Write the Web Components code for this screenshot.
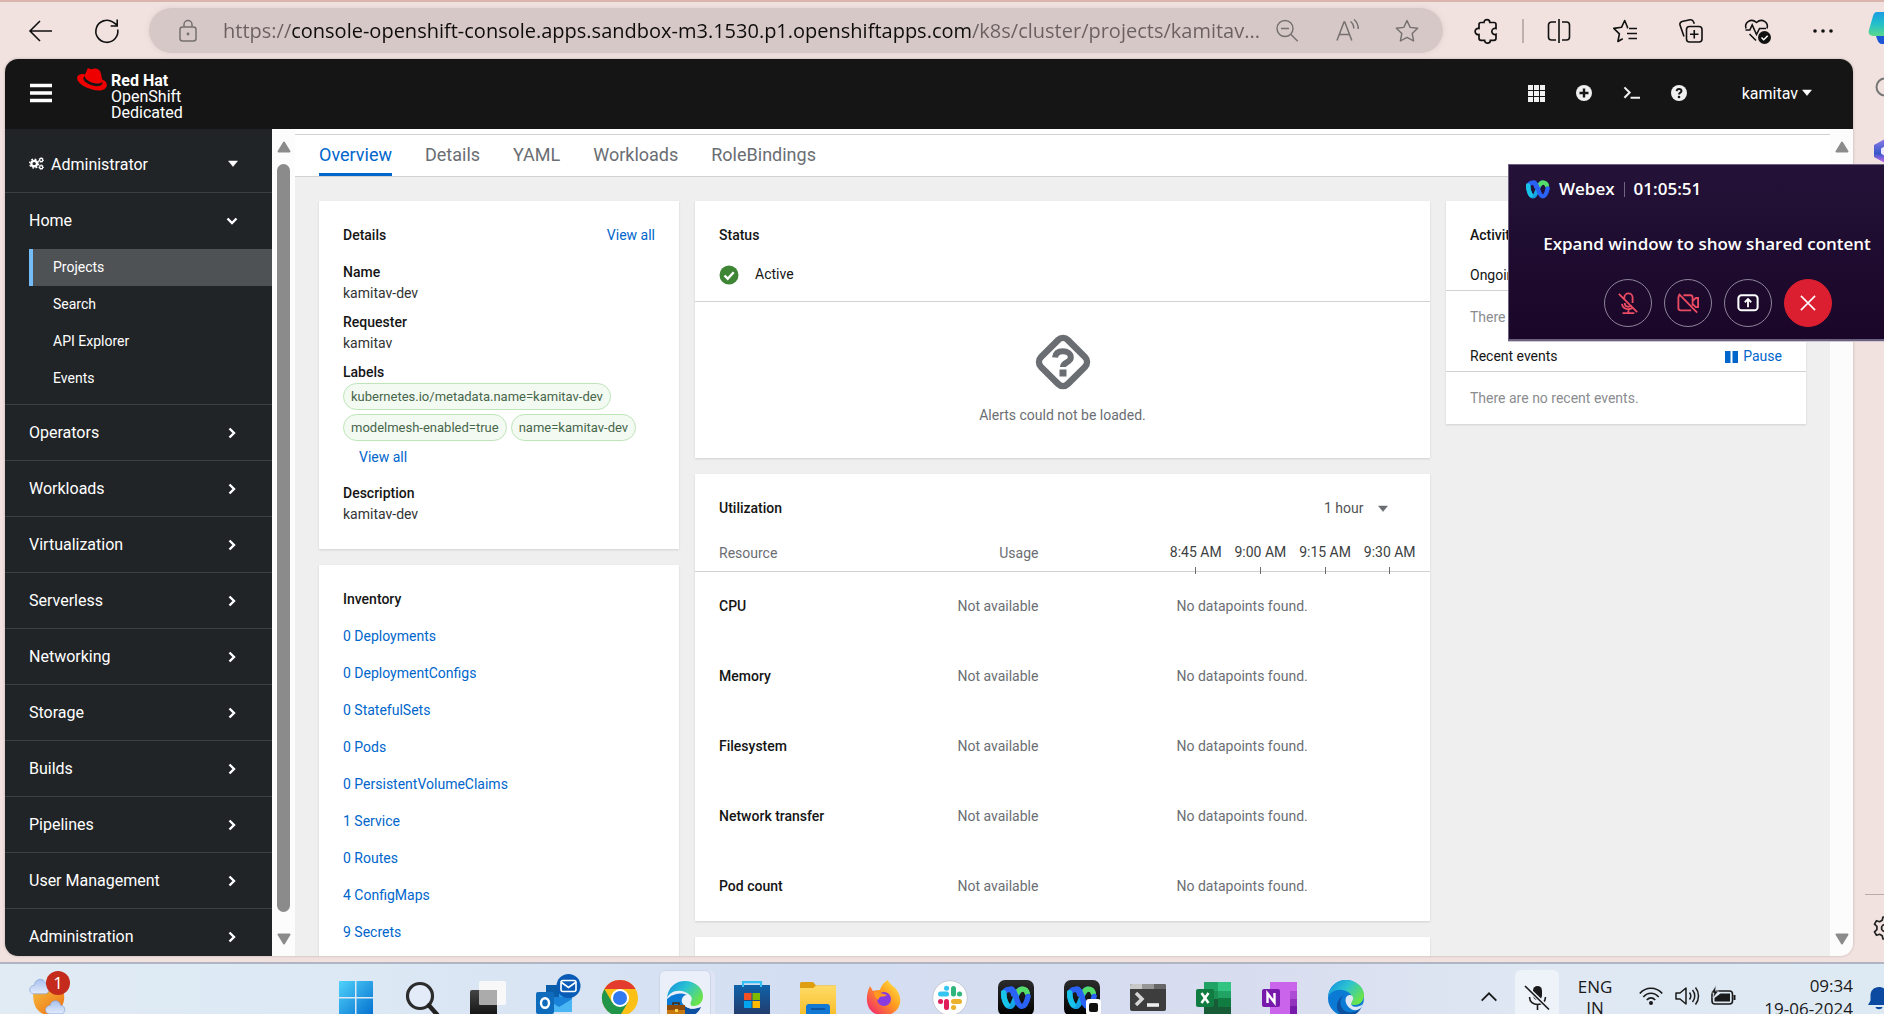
<!DOCTYPE html>
<html lang="en">
<head>
<meta charset="utf-8">
<title>kamitav-dev · Red Hat OpenShift Dedicated</title>
<style>
html, body { margin: 0; height: 100%; }
body { font: 14px/21px Roboto, sans-serif; color: #151515; overflow: hidden; }
</style>
</head>
<body>
<desktop-screen></desktop-screen>
<script>
const ICONS = {
  back: ['0 0 24 24', '<path d="M23 12H1M11 2 1 12l10 10" fill="none" stroke="currentColor" stroke-width="1.6"/>'],
  reload: ['0 0 24 24', '<path d="M22.700 10.500A11 11 0 1 1 18 3.200L22 6M22.200 .5V7h-6.500" fill="none" stroke="currentColor" stroke-width="1.600"/>'],
  lock: ['0 0 18 24', '<g fill="none" stroke="currentColor" stroke-width="1.500"><rect x="1" y="8" width="16" height="14" rx="2.500"/><path d="M5 8V5.500a4 4 0 0 1 8 0V8"/></g><circle cx="9" cy="15" r="1.400" fill="currentColor"/>'],
  zoomOut: ['0 0 24 24', '<g fill="none" stroke="currentColor" stroke-width="1.400"><circle cx="10" cy="9.500" r="8"/><path d="m15.700 15.300 7 7M6 9.500h8"/></g>'],
  readAloud: ['0 0 24 24', '<g fill="none" stroke="currentColor" stroke-width="1.500"><path d="m2 21.500 7-18.500h.8l7 18.500M4.800 15.500h9.200M15.500 2.500c2.200 1.700 3.300 4 3.300 7M19 .5c3 2.500 4.300 5.500 4.300 9.500"/></g>'],
  star: ['0 0 24 24', '<path d="m12 1.500 3.200 6.900 7.500.9-5.500 5.200 1.400 7.500L12 18.400 5.400 22l1.400-7.500L1.300 9.300l7.500-.9z" fill="none" stroke="currentColor" stroke-width="1.400" stroke-linejoin="round"/>'],
  puzzle: ['0 0 24 24', '<path d="M7 3.500h3a2.900 2.900 0 0 1 5.800 0H20a2 2 0 0 1 2 2v4a3.100 3.100 0 1 0 0 5.800v4a2 2 0 0 1-2 2h-3.600a2.900 2.900 0 0 1-5.800 0H7a2 2 0 0 1-2-2V15.500a3.100 3.100 0 1 1 0-6v-4a2 2 0 0 1 2-2z" fill="none" stroke="currentColor" stroke-width="1.700"/>'],
  split: ['0 0 24 24', '<path d="M9 3H4.500A3 3 0 0 0 1.500 6v12a3 3 0 0 0 3 3H9M15 3h4.500a3 3 0 0 1 3 3v12a3 3 0 0 1-3 3H15M12 0v24" fill="none" stroke="currentColor" stroke-width="1.600"/>'],
  favorites: ['0 0 24 24', '<path d="M14.500 8.200 11.700 1.500 8.500 8.300.8 9.400l5.600 5.400-1.500 7.700 4.800-2.700M16 9.500h8M14 14.500h10M15.500 19.500H24M14 8.200l1 .9" fill="none" stroke="currentColor" stroke-width="1.600" stroke-linejoin="round"/>'],
  collections: ['0 0 24 24', '<g fill="none" stroke="currentColor" stroke-width="1.600"><rect x="7.500" y="7.500" width="15.500" height="15.500" rx="3"/><path d="M15.250 11v8.500M11 15.250h8.500M5 17.500 1 6a3 3 0 0 1 2-3.500L11 .8a3 3 0 0 1 3.500 2l.8 2"/></g>'],
  health: ['0 0 24 24', '<g fill="none" stroke="currentColor" stroke-width="1.600"><path d="M1 9.500C-1 3.500 6-1.500 11.500 3.500 17-1.500 24 3.500 22 9.500M.5 11h4.300l2.400-5 4.300 9.500 3-6h6.500M4.500 15l6.500 6.500"/></g><circle cx="19.500" cy="18.500" r="6.500" fill="currentColor"/><path d="m16.500 18.500 2.200 2.200 4-4" fill="none" stroke="#fff" stroke-width="1.500"/>'],
  dots: ['0 0 24 24', '<g fill="currentColor"><circle cx="4" cy="12" r="1.800"/><circle cx="12" cy="12" r="1.800"/><circle cx="20" cy="12" r="1.800"/></g>'],
  copilot: ['0 0 34 34', '<defs><linearGradient id="a" x2="0" y2="1"><stop stop-color="#1b9de2"/><stop offset=".5" stop-color="#23c0c9"/><stop offset="1" stop-color="#5bd88a"/></linearGradient></defs><path d="M9 1h16l-5 20c-1 3-2 4-5 4H5c-4 0-5-3-4-6L5 5c.8-2.500 2-4 4-4z" fill="url(#a)"/><path d="M8 25h14v8h-8c-3 0-4-2-6-8z" fill="#1c57d6"/>'],
  search: ['0 0 24 24', '<circle cx="12" cy="10" r="8.500" fill="none" stroke="#777" stroke-width="2"/>'],
  hexagon: ['0 0 24 24', '<defs><linearGradient id="a" x2="0" y2="1"><stop stop-color="#8f7be8"/><stop offset=".6" stop-color="#3557c8"/><stop offset="1" stop-color="#d06df0"/></linearGradient></defs><path d="m12 0 11 6v12l-11 6L1 18V6z" fill="url(#a)"/><path d="M12 7 8 9.500v5l4 2.500z" fill="#efe7ff"/>'],
  gear: ['0 0 24 24', '<path d="m10 1 4 0 .8 3.200 2.600 1.500 3.100-1 2 3.400-2.400 2.300v3.200l2.400 2.300-2 3.400-3.100-1-2.600 1.500L14 23h-4l-.8-3.200-2.600-1.500-3.100 1-2-3.400 2.400-2.300v-3.200L1.500 8.100l2-3.400 3.100 1 2.600-1.500z" fill="none" stroke="currentColor" stroke-width="1.700" stroke-linejoin="round"/><circle cx="12" cy="12" r="3.500" fill="none" stroke="currentColor" stroke-width="1.700"/>'],
  bars: ['0 0 22 20', '<path d="M0 2.500h22M0 10h22M0 17.500h22" stroke="currentColor" stroke-width="3.400"/>'],
  hat: ['0 0 30 23', '<path d="M9 4.500 10.300 1c.3-.8 1-1 2-.6.900.4 1.800 1 3 .6C17 .4 18.600 0 20.500 1c2 1 2.700 2 3.300 4.200l1.400 6.300c3.500 1.300 4.900 3.700 4.600 6-.6 4.300-6.200 6.200-13.600 4.300C7.500 19.500-.5 14.500.1 9.700.5 6.800 4 5.300 8 6.500z" fill="#e00"/><path d="M8 7.500c-1 2.500 3.500 6.200 8.500 7.500 4.500 1.200 8 .5 8.600-1.500l.3 2c-1 2.700-5.200 3.300-9.900 2C10 16 5.500 12.500 6.500 9.500z" fill="#151515"/>'],
  grid: ['0 0 17 17', '<path d="M0 0h5v5H0zM6 0h5v5H6zM12 0h5v5h-5zM0 6h5v5H0zM6 6h5v5H6zM12 6h5v5h-5zM0 12h5v5H0zM6 12h5v5H6zM12 12h5v5h-5z" fill="currentColor"/>'],
  plusCircle: ['0 0 16 16', '<circle cx="8" cy="8" r="8" fill="currentColor"/><path d="M8 3.500v9M3.500 8h9" stroke="#151515" stroke-width="2.400"/>'],
  terminal: ['0 0 18 16', '<path d="m1.500 2.500 5.500 5.500-5.500 5.500" fill="none" stroke="currentColor" stroke-width="2.200"/><path d="M8 13.500h10" stroke="currentColor" stroke-width="2.200"/>'],
  helpCircle: ['0 0 16 16', '<circle cx="8" cy="8" r="8" fill="currentColor"/><path d="M5.600 6.200C5.800 4.600 6.800 4 8 4c1.400 0 2.500.8 2.500 2.100C10.500 7.700 8 7.600 8 9.600" fill="none" stroke="#151515" stroke-width="1.900"/><circle cx="8" cy="12" r="1.300" fill="#151515"/>'],
  caret: ['0 0 10 6', '<path d="M.5 0h9L5 5.500z" fill="currentColor" stroke="currentColor" stroke-width=".5"/>'],
  cogs: ['0 0 16 14', '<g fill="none" stroke="currentColor"><circle cx="5.500" cy="7" r="3" stroke-width="2.400"/><circle cx="5.500" cy="7" r="4.700" stroke-width="1.600" stroke-dasharray="1.850 1.840"/><circle cx="13" cy="3.200" r="1.700" stroke-width="1.300"/><circle cx="13" cy="10.800" r="1.700" stroke-width="1.300"/><circle cx="13" cy="3.200" r="2.500" stroke-width="1" stroke-dasharray="1 1"/><circle cx="13" cy="10.800" r="2.500" stroke-width="1" stroke-dasharray="1 1"/></g>'],
  down: ['0 0 12 12', '<path d="m1.500 3.500 4.500 4.500 4.500-4.500" fill="none" stroke="currentColor" stroke-width="2.400"/>'],
  right: ['0 0 12 12', '<path d="m3.500 1.500 4.500 4.500-4.500 4.500" fill="none" stroke="currentColor" stroke-width="2.400"/>'],
  arrowUp: ['0 0 14 12', '<path d="M7 1.500 12.500 10.500h-11z" fill="#8b8b8b" stroke="#8b8b8b" stroke-width="2" stroke-linejoin="round"/>'],
  arrowDown: ['0 0 14 12', '<path d="M7 10.500 12.500 1.500h-11z" fill="#8b8b8b" stroke="#8b8b8b" stroke-width="2" stroke-linejoin="round"/>'],
  check: ['0 0 20 20', '<circle cx="10" cy="10" r="9.500" fill="#3e8635"/><path d="m5.500 10.500 3.200 3.200 6-6.500" fill="none" stroke="#fff" stroke-width="2.400"/>'],
  unknown: ['0 0 54 54', '<rect x="8" y="8" width="38" height="38" rx="7" transform="rotate(45 27 27)" fill="none" stroke="#6a6e73" stroke-width="6.500"/><path d="M19 22.500c.5-4.500 3.700-6.300 7.800-6.300 4.500 0 8 2.200 8 6.300 0 5.200-7.800 4.500-7.800 9.500" fill="none" stroke="#6a6e73" stroke-width="6"/><rect x="23.500" y="34.500" width="7" height="7" fill="#6a6e73"/>'],
  pause: ['0 0 13 12', '<path d="M0 0h5.500v12H0zM7.500 0H13v12H7.500z" fill="currentColor"/>'],
  webex: ['0 0 36 28', '<defs><linearGradient id="a" x2="1" y2="1"><stop stop-color="#17d0ea"/><stop offset="1" stop-color="#1291e0"/></linearGradient></defs><g fill="none" stroke-width="6.500" stroke-linecap="round"><path d="M3.200 8c0 7 3 16.500 7.500 16.500C16.500 24.500 18 5 24 4" stroke="url(#a)"/><path d="M20.500 7C24 2 30 3 31.500 8.500" stroke="#54dd6a"/><path d="M12 3.500C18 4 18 24 25 24.500c3.500.2 6-5 7.500-12M15 10c0-5-6-8-10-4" stroke="#2a62f5"/><path d="M3.200 8c0 5 1.500 11 4 14.500" stroke="#17c3e8"/></g>'],
  micOff: ['0 0 24 24', '<g fill="none" stroke="currentColor" stroke-width="2"><path d="M8 8V6a4.500 4.500 0 0 1 9 0v6M8.500 12c0 5 5.500 5 7 2M5.500 13c.5 6 8.500 7.500 12 3.500M12.500 18.500V23M6 23h13M2 2l20 20"/></g>'],
  camOff: ['0 0 24 24', '<g fill="none" stroke="currentColor" stroke-width="2"><path d="M7 3.500h7.500a2.500 2.500 0 0 1 2.500 2.500v9M15.500 20H4a2.500 2.500 0 0 1-2.500-2.500V6c0-1.500.8-2.200 2-2.500M17 10l3.500-3.500H23v10h-2.500L17 13M2 2l20 20.500"/></g>'],
  share: ['0 0 24 24', '<rect x="1.500" y="3.500" width="21" height="16.500" rx="3.500" fill="none" stroke="currentColor" stroke-width="2.200"/><path d="M12 16.500V8M8.500 11.200 12 7.800l3.500 3.400" fill="none" stroke="currentColor" stroke-width="2"/>'],
  close: ['0 0 24 24', '<path d="m3.500 3.500 17 17m0-17-17 17" fill="none" stroke="currentColor" stroke-width="1.900"/>'],
  weather: ['0 0 36 36', '<defs><linearGradient id="a" x2="1" y2="1"><stop stop-color="#f5bd3d"/><stop offset="1" stop-color="#ee6b12"/></linearGradient><linearGradient id="b" x2="0" y2="1"><stop stop-color="#a9c1ee"/><stop offset="1" stop-color="#e2ebfb"/></linearGradient></defs><path d="M4 14c6-3 16-5 24-4 5 1 6 6 5 12-2 8-8 13-14 13C10 35 3 28 4 14z" fill="url(#a)"/><g fill="url(#b)" stroke="#8ba6d8" stroke-width=".7"><path d="M4 15c-5-1-4-8 1-8C6-.5 15-.5 16 6c4 1 4 8 0 9z"/><path d="M19 34c-5-1-4-8 1-8 1-6 9-6 10 0 5 0 5 7 1 8z"/></g>'],
  windows: ['0 0 36 36', '<defs><linearGradient id="a" x2="1" y2="1"><stop stop-color="#4fd2fb"/><stop offset="1" stop-color="#0570cf"/></linearGradient></defs><path d="M2 1h15v16H1V2a1 1 0 0 1 1-1zM18.500 1H34a1 1 0 0 1 1 1v15H18.500zM1 18.500h16V35H2a1 1 0 0 1-1-1zM18.500 18.500H35V34a1 1 0 0 1-1 1H18.500z" fill="url(#a)"/>'],
  find: ['0 0 36 36', '<circle cx="16" cy="16" r="12.500" fill="#e8eefa" fill-opacity=".6" stroke="#2c2c2c" stroke-width="3.200"/><path d="m25 25.500 8 9" stroke="#222" stroke-width="4.500" stroke-linecap="round"/>'],
  tasks: ['0 0 36 36', '<defs><linearGradient id="a" x2="0" y2="1"><stop stop-color="#444"/><stop offset="1" stop-color="#111"/></linearGradient></defs><rect y="10" width="27" height="27" rx="2" fill="url(#a)"/><rect x="9" y="1" width="27" height="24" rx="2" fill="#f8f8f8"/><path d="M9 10h18v15H11a2 2 0 0 1-2-2z" fill="#ababab"/>'],
  outlook: ['-8 0 54 42', '<path d="M11 11h26v27H11z" fill="#1a82d8"/><path d="M11 11h13v12H11z" fill="#0a5da8"/><path d="M24 11h13v12H24z" fill="#2a9be8"/><path d="M11 38V25l13 8 13-8v13z" fill="#4ab6f4"/><rect x="1" y="18" width="18" height="22" rx="2" fill="#0f6cbd"/><ellipse cx="10" cy="29" rx="4" ry="4.800" fill="none" stroke="#fff" stroke-width="2.400"/><circle cx="33.500" cy="12" r="12" fill="#0a5bb5"/><rect x="26" y="6.500" width="15" height="11" rx="2" fill="none" stroke="#fff" stroke-width="1.600"/><path d="m26.500 8.500 7 5 7-5" fill="none" stroke="#fff" stroke-width="1.600"/>'],
  chrome: ['0 0 36 36', '<circle cx="18" cy="18" r="18" fill="#fdc015"/><path d="M2.400 9A18 18 0 0 1 33.600 9H18z" fill="#e33b2e"/><path d="M2.400 9A18 18 0 0 0 18 36l7.800-13.500H10.200z" fill="#21964b"/><circle cx="18" cy="18" r="9" fill="#fff"/><circle cx="18" cy="18" r="7" fill="#3079ee"/>'],
  edge: ['0 0 36 36', '<defs><linearGradient id="a" x2="1" y2=".6"><stop offset=".1" stop-color="#1795dd"/><stop offset=".5" stop-color="#2bc3d2"/><stop offset="1" stop-color="#6be34b"/></linearGradient></defs><circle cx="18" cy="18" r="18" fill="#0b7ad4"/><path d="M0 17C1 6 9 0 18 0c10 0 18 7 18 15 0 6-4 10-9 10-5 0-6-2-4-4 2-3 1-8-5-10C10 8 3 11 0 17z" fill="url(#a)"/><path d="M16 15c-5 4-5 12 1 16 5 3 12 1 16-3-4 8-13 9.500-19 7C6 31 8 19 16 15z" fill="#0d50a0"/><path d="M19 16c5-3 8 2 5 5.500-3 4 2 6 6 5 2-.4 4-1.500 5-3-2 8-10 8-14 4-3-3-5-8-2-11.500z" fill="#dfe7f6"/>'],
  edgeWork: ['0 0 36 36', '<defs><linearGradient id="a" x2="1" y2=".6"><stop offset=".1" stop-color="#1795dd"/><stop offset=".5" stop-color="#2bc3d2"/><stop offset="1" stop-color="#6be34b"/></linearGradient></defs><path d="M0 18A18 18 0 0 1 20 14V30L0 24z" fill="#0b7ad4"/><path d="M0 17C1 6 9 0 18 0c10 0 18 7 18 15 0 6-4 10-9 10-5 0-6-2-4-4 2-3 1-8-5-10C10 8 3 11 0 17z" fill="url(#a)"/><path d="M16 22c5 8 12 6 18 4-3 7-9 10-16 10z" fill="#0d50a0"/><path d="M19 14c5-1 7 3 5 6.500-2 4 2 6 6 6-7 3-13-1-15-5-1-3 1-7 4-7.500z" fill="#edf1fa"/><rect y="24" width="18" height="13" rx="1" fill="#c8790f"/><path d="M0 24h18v5H0z" fill="#8f4b08"/><path d="M6 24v-2h6v2" fill="none" stroke="#4a2a08" stroke-width="1.500"/><rect x="8" y="28" width="3" height="3" fill="#ffd34a"/>'],
  store: ['0 0 36 36', '<defs><linearGradient id="a" x2="0" y2="1"><stop stop-color="#0f62ab"/><stop offset="1" stop-color="#233a68"/></linearGradient></defs><path d="M9 7V2.200h18V7" fill="none" stroke="#35c0f5" stroke-width="2.200"/><path d="M0 5h36v29a2 2 0 0 1-2 2H2a2 2 0 0 1-2-2z" fill="url(#a)"/><path d="M9 7V5M27 7V5" stroke="#35c0f5" stroke-width="2"/><path d="M10 13h7.500v7H10z" fill="#f25022"/><path d="M18.500 13H26v7h-7.500z" fill="#7fba00"/><path d="M10 21h7.500v7H10z" fill="#00a4ef"/><path d="M18.500 21H26v7h-7.500z" fill="#ffb900"/>'],
  folder: ['0 0 36 36', '<defs><linearGradient id="a" x2="0" y2="1"><stop stop-color="#ffdb66"/><stop offset="1" stop-color="#f7bd2a"/></linearGradient></defs><path d="M0 3.500A1.500 1.500 0 0 1 1.500 2H13l3 3.500h20V12H0z" fill="#df9e0d"/><path d="M0 8h13l3-2.500h20V36H0z" fill="url(#a)"/><path d="M6 36V27a3 3 0 0 1 3-3h18a3 3 0 0 1 3 3v9z" fill="#1178d4"/><path d="M11 29h14" stroke="#0a4d93" stroke-width="1.500"/>'],
  firefox: ['0 0 36 36', '<defs><linearGradient id="a" x1="1" x2="0" y2="1"><stop stop-color="#fff04a"/><stop offset=".45" stop-color="#ff9a1f"/><stop offset="1" stop-color="#f0157a"/></linearGradient></defs><path d="M22 0c1 4 6 6 8 9 7 9 5 19-3 24-9 5-20 2-24-5C0 22 0 14 4 6l3 5c3-1 5-1 7-1 1-4 4-8 8-10z" fill="url(#a)"/><circle cx="18" cy="19" r="7" fill="#8a3be0"/><path d="M8 12c6 0 8 2 13 3-3 3-6 0-8 3 0 3-4 2-5-6z" fill="#ff9a1f"/>'],
  slack: ['0 0 36 36', '<circle cx="18" cy="18" r="17.300" fill="#fff" stroke="#c4c9d4"/><g stroke-width="5" stroke-linecap="round"><path d="M8.500 14h6" stroke="#36c5f0"/><path d="M14.500 8.200h.1" stroke="#36c5f0"/><path d="M21.500 8.500V14" stroke="#2eb67d"/><path d="M27.500 14h.1" stroke="#2eb67d"/><path d="M21.500 21.500h6" stroke="#ecb22e"/><path d="M21.500 27.500h.1" stroke="#ecb22e"/><path d="M14.500 21.500v6" stroke="#e01e5a"/><path d="M8.500 21.500h.1" stroke="#e01e5a"/></g>'],
  console: ['0 0 36 36', '<rect y="4" width="36" height="27" rx="2" fill="#3d3d3d"/><path d="M0 9V6a2 2 0 0 1 2-2h10v5z" fill="#c8c8c8"/><path d="M12 4h12v5H12z" fill="#969696"/><path d="M24 4h10a2 2 0 0 1 2 2v3H24z" fill="#666"/><path d="m6 13 6 6-6 6" fill="none" stroke="#d5d5d5" stroke-width="3.500"/><path d="M17 25h12" stroke="#eee" stroke-width="3.600"/>'],
  excel: ['0 0 36 36', '<path d="M8 2h27v34H8z" fill="#185c37"/><path d="M8 2h14v9H8z" fill="#21a366"/><path d="M22 2h13v9H22z" fill="#33c481"/><path d="M8 11h14v8H8z" fill="#1c8f55"/><path d="M22 11h13v7H22z" fill="#21a366"/><path d="M22 18h13v9H22z" fill="#107c41"/><rect y="9" width="18" height="18" rx="2" fill="#107c41"/><path d="m5.500 13 7 10m0-10-7 10" stroke="#fff" stroke-width="2.500"/>'],
  onenote: ['0 0 36 36', '<path d="M8 2h27v34H8z" fill="#ca64ea"/><path d="M28 11h7v8h-7z" fill="#ae4bd5"/><path d="M28 19h7v7h-7z" fill="#9332bf"/><path d="M28 26h7v10h-7z" fill="#7719aa"/><rect y="9" width="18" height="18" rx="2" fill="#7719aa"/><path d="M5.500 23V13.500l7 9V13" fill="none" stroke="#fff" stroke-width="2.400"/>'],
  chevUp: ['0 0 24 24', '<path d="m4 16 8-8 8 8" fill="none" stroke="currentColor" stroke-width="2"/>'],
  micMuted: ['0 0 24 24', '<rect x="8" y="0" width="9" height="14" rx="4.500" fill="currentColor"/><path d="M4.500 11c0 10 16 10 16 0M12.500 18.500V24" fill="none" stroke="currentColor" stroke-width="1.600"/><path d="m1 1 23 22" stroke="#eef2f9" stroke-width="4"/><path d="m0 0 24 23.500" stroke="currentColor" stroke-width="1.700"/>'],
  wifi: ['0 0 24 20', '<g fill="none" stroke="currentColor" stroke-width="1.700"><path d="M.8 7.500c6-7 16.400-7 22.400 0M4.300 11c4.500-5 10.900-5 15.400 0M7.800 14c2.600-2.800 5.800-2.800 8.400 0"/></g><circle cx="12" cy="17" r="2" fill="currentColor"/>'],
  speaker: ['0 0 24 20', '<path d="M1 7h4l6-5v16l-6-5H1zM14.500 6.500c1.500 2 1.500 5 0 7M17.500 4c3 3.500 3 8.500 0 12M20.500 1.500c4 5 4 12 0 17" fill="none" stroke="currentColor" stroke-width="1.500" stroke-linejoin="round"/>'],
  battery: ['0 0 25 20', '<rect x="1" y="5" width="20.500" height="13" rx="3" fill="none" stroke="currentColor" stroke-width="1.600"/><path d="M22.500 9h2v5h-2z" fill="currentColor"/><path d="M3.500 15.500V12l6-4.500h9.500v8z" fill="currentColor"/><path d="M5-.5 0 7h3l-1 5 5.500-7h-3z" fill="currentColor" stroke="#dfe9f4" stroke-width=".6"/>'],
  bell: ['0 0 24 24', '<path d="M12 0c5 0 8.500 3.500 8.500 8.500v5L23 18H1l2.500-4.500v-5C3.500 3.500 7 0 12 0zM8.500 20h7c-.5 3-6.500 3-7 0z" fill="#0b4aa0"/>']
};

/* Registers an element whose shadow root is cloned from a template. */
function define(name, css, markup, setup) {
  const template = document.createElement('template');
  template.innerHTML = '<style>*{box-sizing:border-box}:host{display:block}button,select,input{font:inherit;color:inherit;border:0;background:none;padding:0;margin:0}button{display:inline-flex;align-items:center}a{color:#06c;text-decoration:none}h1,h2,h3,p,ul,dl,dd,dt{margin:0;padding:0;font:inherit;list-style:none}' + css + '</style>' + markup;
  customElements.define(name, class extends HTMLElement {
    connectedCallback() {
      if (this.shadowRoot) return;
      this.attachShadow({ mode: 'open' }).append(template.content.cloneNode(true));
      if (setup) setup.call(this, this.shadowRoot);
    }
  });
}

define('ui-icon', ':host{display:inline-block;flex:none}svg{display:block;overflow:visible}', '', function (root) {
  const [box, body] = ICONS[this.getAttribute('name')];
  const [, , w, h] = box.split(' ').map(Number);
  const size = Number(this.getAttribute('size')) || w;
  root.innerHTML += `<svg viewBox="${box}" width="${size}" height="${size * h / w}" aria-hidden="true">${body}</svg>`;
});

define('browser-toolbar', `
:host{background:#f1e2e0;border-top:2px solid #d9b5ae;padding:6px 0;color:#111;overflow:hidden}
.bar{display:flex;align-items:center;height:45px;padding-left:29px}
.nav{display:flex;gap:42px;margin-right:30px}
.address{flex:1;min-width:0;height:45px;border-radius:23px;background:#d6c8c6;box-shadow:0 0 6px #e0cfcd;display:flex;align-items:center;padding:0 24px 0 30px;color:#757070}
input{flex:1;min-width:0;margin:0 10px 0 26px;font:20px/28px "Open Sans",sans-serif;outline:0;color:#6a6062;text-overflow:ellipsis;-webkit-text-fill-color:transparent;-webkit-background-clip:text;background-clip:text;background-image:linear-gradient(90deg,#6a6062 69px,#0e0c0c 69px 749px,#6a6062 749px)}
.in{display:flex;gap:36px}
.tools{display:flex;align-items:center;margin-left:31px;gap:42px}
.tools i{width:2px;height:24px;background:#bfb0ae;margin:0 -19px 0 -18px}
.end{width:16px;margin-left:33px}`,
`<div class="bar"><div class="nav"><button aria-label="Back"><ui-icon name="back"></ui-icon></button><button aria-label="Refresh"><ui-icon name="reload"></ui-icon></button></div>
<div class="address"><ui-icon name="lock"></ui-icon><input aria-label="Address" value="https://console-openshift-console.apps.sandbox-m3.1530.p1.openshiftapps.com/k8s/cluster/projects/kamitav...">
<div class="in"><button aria-label="Zoom out"><ui-icon name="zoomOut"></ui-icon></button><button aria-label="Read aloud"><ui-icon name="readAloud"></ui-icon></button><button aria-label="Add to favorites"><ui-icon name="star"></ui-icon></button></div></div>
<div class="tools"><button aria-label="Extensions"><ui-icon name="puzzle"></ui-icon></button><i></i><button aria-label="Split screen"><ui-icon name="split"></ui-icon></button><button aria-label="Favorites"><ui-icon name="favorites"></ui-icon></button><button aria-label="Collections"><ui-icon name="collections"></ui-icon></button><button aria-label="Browser essentials"><ui-icon name="health"></ui-icon></button><button aria-label="Settings and more"><ui-icon name="dots"></ui-icon></button></div>
<div class="end"><button aria-label="Copilot"><ui-icon name="copilot"></ui-icon></button></div></div>`);

define('browser-rail', `
:host{width:31px;overflow:hidden;display:flex;flex-direction:column;align-items:flex-start;padding:18px 0 16px 20px;color:#222}
.gap{flex:1}button{margin-bottom:38px}hr{width:20px;margin:0 0 21px -8px;border:0;border-top:1px solid #b9aba9}button:last-child{margin:0}`,
`<button aria-label="Search"><ui-icon name="search"></ui-icon></button><button aria-label="Microsoft 365"><ui-icon name="hexagon"></ui-icon></button><div class="gap"></div><hr><button aria-label="Settings"><ui-icon name="gear"></ui-icon></button>`);

define('console-masthead', `
:host{background:#151515;color:#fff;display:flex;align-items:center;height:70px;padding:0 41px 2px 25px;font-size:16px}
.logo{display:flex;margin-left:25px;color:#fff;line-height:16px;gap:4px}
.logo div{padding-top:8px}
.logo b{display:block;font-weight:700}.logo span{display:block}.logo ui-icon{margin-top:3px}
.tools{margin-left:auto;display:flex;align-items:center;gap:31px;color:#f0f0f0}
.user{gap:4px;margin-left:24px;color:#fff}`,
`<button aria-label="Global navigation"><ui-icon name="bars"></ui-icon></button>
<a class="logo" href="#"><ui-icon name="hat"></ui-icon><div><b>Red Hat</b><span>OpenShift</span><span>Dedicated</span></div></a>
<div class="tools"><button aria-label="Applications"><ui-icon name="grid" size="17"></ui-icon></button><button aria-label="Add"><ui-icon name="plusCircle"></ui-icon></button><button aria-label="Web terminal"><ui-icon name="terminal" size="17"></ui-icon></button><button aria-label="Help"><ui-icon name="helpCircle"></ui-icon></button><button class="user">kamitav<ui-icon name="caret"></ui-icon></button></div>`);

define('nav-section', `
:host{border-top:1px solid #3c3f42}
button{width:100%;height:55px;padding:0 34px 0 24px;justify-content:space-between;color:#fff;font-size:16px;line-height:24px}
::slotted(nav-link){display:block}
:host([open]) .items{padding-bottom:7px}:host([open]) button{height:56px}`,
`<button><span></span></button><div class="items"><slot></slot></div>`,
function (root) {
  const open = this.hasAttribute('open');
  const button = root.querySelector('button');
  root.querySelector('span').textContent = this.getAttribute('label');
  button.setAttribute('aria-expanded', open);
  button.insertAdjacentHTML('beforeend', `<ui-icon name="${open ? 'down' : 'right'}"></ui-icon>`);
});

define('nav-link', `
:host{padding-left:24px}
a{display:block;color:#fff;padding:8px 20px;line-height:21px;border-left:4px solid transparent}
:host([current]) a{background:#4f5255;border-color:#73bcf7}`, `<a href="#"><slot></slot></a>`);

define('console-nav', `
:host{width:267px;flex:none;background:#212427;color:#fff;overflow:hidden}
.perspective{width:100%;height:63px;padding:7px 34px 0 24px;font-size:16px;gap:7px}
.perspective ui-icon:last-child{margin-left:auto}`,
`<button class="perspective"><ui-icon name="cogs" size="15"></ui-icon>Administrator<ui-icon name="caret"></ui-icon></button>
<nav><nav-section label="Home" open><nav-link current>Projects</nav-link><nav-link>Search</nav-link><nav-link>API Explorer</nav-link><nav-link>Events</nav-link></nav-section>
<nav-section label="Operators"></nav-section><nav-section label="Workloads"></nav-section><nav-section label="Virtualization"></nav-section><nav-section label="Serverless"></nav-section><nav-section label="Networking"></nav-section><nav-section label="Storage"></nav-section><nav-section label="Builds"></nav-section><nav-section label="Pipelines"></nav-section><nav-section label="User Management"></nav-section><nav-section label="Administration"></nav-section></nav>`);

define('scroll-track', `
:host{width:23px;flex:none;background:#fcfcfc;display:flex;flex-direction:column;align-items:center;padding:12px 0 11px}
.track{flex:1;padding:11px 0 21px;display:flex}.thumb{width:13px;border-radius:7px;background:#8b8b8b;height:var(--thumb,100%)}`,
`<ui-icon name="arrowUp"></ui-icon><div class="track"><div class="thumb"></div></div><ui-icon name="arrowDown"></ui-icon>`);

define('page-tabs', `
:host{background:#fff;padding-top:5px}
ul{display:flex;gap:33px;border-top:1px solid #d2d2d2;border-bottom:1px solid #d2d2d2;padding:0 24px}
a{display:block;font-size:18px;line-height:27px;padding:6px 0 5px;color:#6a6e73;border-bottom:3px solid transparent}
a[aria-current]{color:#06c;border-color:#06c}`,
`<ul><li><a href="#" aria-current="page">Overview</a></li><li><a href="#">Details</a></li><li><a href="#">YAML</a></li><li><a href="#">Workloads</a></li><li><a href="#">RoleBindings</a></li></ul>`);

define('dash-card', `
:host{background:#fff;box-shadow:0 1px 2px rgba(3,3,3,.13)}
header{display:flex;justify-content:space-between;padding:24px 24px 16px;line-height:21px}
h2{font-weight:500;color:#151515}
:host([blank]){min-height:120px}:host([blank]) header{display:none}`,
`<header><h2></h2><slot name="action"></slot></header><slot></slot>`,
function (root) { root.querySelector('h2').textContent = this.getAttribute('heading') || ''; });

define('details-card', `
dl{padding:0 24px 24px}dt{font-weight:500}dd{margin-bottom:8px;color:#333}dd:last-child{margin:0}
.labels{display:flex;flex-wrap:wrap;gap:4px;margin-bottom:15px}
.labels a{border:1px solid #bde5b8;background:#f3faf2;color:#47664a;border-radius:14px;padding:0 7px;font-size:13px;line-height:25px}
.labels a.all{border:0;background:none;color:#06c;font-size:14px;line-height:21px;padding:2px 16px 0;flex-basis:100%}`,
`<dash-card heading="Details"><a slot="action" href="#">View all</a><dl><dt>Name</dt><dd>kamitav-dev</dd><dt>Requester</dt><dd>kamitav</dd><dt>Labels</dt><dd class="labels"><a href="#">kubernetes.io/metadata.name=kamitav-dev</a><a href="#">modelmesh-enabled=true</a><a href="#">name=kamitav-dev</a><a class="all" href="#">View all</a></dd><dt>Description</dt><dd>kamitav-dev</dd></dl></dash-card>`);

define('inventory-card', `ul{margin-top:-8px;padding:0 24px 24px}li{padding:8px 0}`,
`<dash-card heading="Inventory"><ul></ul></dash-card>`, function (root) {
  const rows = ['0 Deployments', '0 DeploymentConfigs', '0 StatefulSets', '0 Pods', '0 PersistentVolumeClaims', '1 Service', '0 Routes', '4 ConfigMaps', '9 Secrets'];
  root.querySelector('ul').innerHTML = rows.map(r => `<li><a href="#">${r}</a></li>`).join('');
});

define('status-card', `
.state{display:flex;align-items:center;gap:16px;padding:1px 24px 15px;min-height:40px;border-bottom:1px solid #d2d2d2}
.alerts{display:flex;flex-direction:column;align-items:center;gap:16px;padding:33px 24px 32px;color:#6a6e73}`,
`<dash-card heading="Status"><div class="state"><ui-icon name="check"></ui-icon>Active</div><div class="alerts"><ui-icon name="unknown"></ui-icon><p>Alerts could not be loaded.</p></div></dash-card>`);

define('utilization-card', `
.pick{display:flex;align-items:center;position:relative;margin-right:18px;color:#6a6e73}
select{appearance:none;width:64px;color:#4f5255}.pick ui-icon{pointer-events:none;margin-left:-10px}
table{width:100%;border-collapse:collapse;table-layout:fixed;margin-top:8px}
th,td{padding:0;text-align:left;font-weight:400;color:#6a6e73}
thead tr{height:28px;border-bottom:1px solid #d2d2d2}
thead th{vertical-align:top}
tbody tr{height:70px}tbody th{color:#151515;font-weight:500}
th:first-child{padding-left:24px;width:25%}
th:nth-child(2),td:nth-child(2){width:22%;text-align:right;padding-right:2px}
td:nth-child(3){padding-left:136px}
.hours{display:flex;padding:0 8px 0 123px;color:#3c3f42;margin-bottom:-6px;white-space:nowrap}
.hours span{flex:1 1 0;display:flex;flex-direction:column;align-items:center;margin-top:-1px}
.hours span::after{content:"";width:1px;height:7px;background:#6a6e73;margin-top:4px}`,
`<dash-card heading="Utilization"><label class="pick" slot="action"><select aria-label="Time range"><option>1 hour</option></select><ui-icon name="caret"></ui-icon></label>
<table><thead><tr><th>Resource</th><th>Usage</th><th><div class="hours"><span>8:45 AM</span><span>9:00 AM</span><span>9:15 AM</span><span>9:30 AM</span></div></th></tr></thead><tbody></tbody></table></dash-card>`,
function (root) {
  root.querySelector('tbody').innerHTML = ['CPU', 'Memory', 'Filesystem', 'Network transfer', 'Pod count'].map(r => `<tr><th scope="row">${r}</th><td>Not available</td><td>No datapoints found.</td></tr>`).join('');
});

define('activity-card', `
.row{display:flex;justify-content:space-between;padding:3px 24px 4px;border-bottom:1px solid #d2d2d2}
p{padding:16px 24px 15px;color:#8a8d90}
button{color:#06c;gap:5px}`,
`<dash-card heading="Activity"><div class="row"><h3>Ongoing</h3></div><p>There are no ongoing activities.</p><div class="row"><h3>Recent events</h3><button><ui-icon name="pause"></ui-icon>Pause</button></div><p>There are no recent events.</p></dash-card>`);

define('project-dashboard', `
:host{flex:1;display:flex;align-items:flex-start;gap:16px;padding:24px;background:#efefef;overflow:hidden;min-height:0}
.side{width:360px;flex:none}.main{flex:1;min-width:0}
.side,.main{display:flex;flex-direction:column;gap:16px}`,
`<div class="side"><details-card></details-card><inventory-card></inventory-card></div><div class="main"><status-card></status-card><utilization-card></utilization-card><dash-card blank></dash-card></div><div class="side"><activity-card></activity-card></div>`);

define('call-window', `
:host{position:absolute;right:0;top:164px;width:376px;height:177px;padding:12px 0 12px 17px;color:#fff;font:600 17px/26px "Open Sans",sans-serif;background:linear-gradient(#241238,#190628);border:1px solid #6c6280;border-right:0;border-bottom-width:2px;box-shadow:0 1px 0 #cfc9d2}
.head{display:flex;align-items:center;gap:9px;line-height:24px}.head i{width:1px;height:15px;background:#6f6580}
p{text-align:center;margin:30px 0 22px;padding-left:4px;white-space:nowrap}
.row{display:flex;justify-content:center;gap:12px;padding-left:26px}
button{width:48px;height:48px;border-radius:50%;border:1px solid #8d8499;justify-content:center;color:#ea4b62}
.share{color:#fff}.end{background:#db1f30;border-color:#db1f30;color:#fff}`,
`<div class="head"><ui-icon name="webex" size="24"></ui-icon><span>Webex</span><i></i><span>01:05:51</span></div><p>Expand window to show shared content</p>
<div class="row"><button aria-label="Unmute"><ui-icon name="micOff" size="22"></ui-icon></button><button aria-label="Start video"><ui-icon name="camOff" size="22"></ui-icon></button><button class="share" aria-label="Share"><ui-icon name="share" size="22"></ui-icon></button><button class="end" aria-label="Leave"><ui-icon name="close" size="20"></ui-icon></button></div>`);

define('task-bar', `
:host{display:flex;height:52px;overflow:hidden;border-top:2px solid #b0b5c1;background:linear-gradient(90deg,#e0ebf4,#dce8f4 20%,#d3def2 42%,#d8dcef 66%,#dfe8f3 82%,#deeaf3);color:#1a1a1a;font:17px/21px "Open Sans",sans-serif;align-items:flex-start}
.left{flex:0 1 323px;padding:14px 0 0 29px}.weather{position:relative}
.weather b{position:absolute;left:17px;top:-7px;width:24px;height:24px;border-radius:50%;background:#c42b1c;color:#fff;font-weight:400;line-height:24px;text-align:center}
.apps{display:flex}.apps button{width:66px;height:64px;justify-content:center;align-items:flex-start;padding-top:16px;position:relative}
.apps .mail{padding-top:10px}.apps .on{width:52px;margin:6px 8px 0 6px;padding-top:10px;background:#ebeff9;border:1px solid #cdd5e8;border-radius:6px;box-shadow:5px 0 0 -1px #dfe5f4}
.mini{position:absolute;left:37px;top:35px;width:15px;height:16px;border-radius:3px;background:#fff;padding:4px 3px}
.mini::after{content:"";display:block;width:9px;height:9px;border-radius:2px;background:#111}
.tile{width:36px;height:36px;border-radius:7px;background:linear-gradient(#2c2c2c,#000);display:flex;align-items:center;justify-content:center}
.tray{margin-left:auto;display:flex}
.tray button{align-items:flex-start;justify-content:center}
.up{padding-top:22px;width:52px}
.mic{width:44px;height:60px;background:#eef2f9;border-radius:6px;margin-top:6px}.tray .mic{padding-top:16px}
.lang{width:72px;text-align:center;padding-top:12px}
.sys{padding-top:22px;gap:12px;margin-left:8px}.clock{text-align:right;width:117px;padding-top:10px;line-height:23px}.bell{padding:23px 0 0 14px;width:31px}.bell ui-icon{margin-right:-7px}
.tray .up,.tray .sys{padding-top:22px}.tray .bell{padding-top:23px}`,
`<div class="left"><button class="weather" aria-label="Weather"><ui-icon name="weather" size="38"></ui-icon><b>1</b></button></div>
<div class="apps"></div>
<div class="tray"><button class="up" aria-label="Show hidden icons"><ui-icon name="chevUp" size="22"></ui-icon></button><button class="mic" aria-label="Microphone muted"><ui-icon name="micMuted"></ui-icon></button><div class="lang">ENG<br>IN</div><button class="sys" aria-label="Network, volume and battery"><ui-icon name="wifi"></ui-icon><ui-icon name="speaker"></ui-icon><ui-icon name="battery"></ui-icon></button><div class="clock">09:34<br>19-06-2024</div><button class="bell" aria-label="Notifications"><ui-icon name="bell"></ui-icon></button></div>`,
function (root) {
  const apps = [['windows', 'Start'], ['find', 'Search'], ['tasks', 'Task view'], ['outlook', 'Outlook', 'mail'], ['chrome', 'Chrome'], ['edgeWork', 'Edge, work profile', 'on'], ['store', 'Microsoft Store'], ['folder', 'File Explorer'], ['firefox', 'Firefox'], ['slack', 'Slack'], ['webex', 'Webex', 'tiled'], ['webex', 'Webex meeting', 'tiled'], ['console', 'Terminal'], ['excel', 'Excel'], ['onenote', 'OneNote'], ['edge', 'Edge']];
  root.querySelector('.apps').innerHTML = apps.map(([icon, label, kind = '']) => `<button class="${kind}" aria-label="${label}">${kind === 'tiled' ? `<span class="tile"><ui-icon name="${icon}" size="30"></ui-icon></span>` : `<ui-icon name="${icon}"></ui-icon>`}${label === 'Webex meeting' ? '<span class="mini"></span>' : ''}</button>`).join('');
});

define('desktop-screen', `
:host{height:100vh;display:flex;flex-direction:column;background:#f1e2e0;position:relative;overflow:hidden}
.body{flex:1;min-height:0;display:flex;padding:0 0 6px 5px}
.page{flex:1;min-width:0;display:flex;flex-direction:column;border-radius:13px;overflow:hidden;box-shadow:0 0 2px 1px #d9c9c7}
.cols{flex:1;min-height:0;display:flex}
main{flex:1;min-width:0;display:flex;flex-direction:column}
.short{--thumb:22%}`,
`<browser-toolbar></browser-toolbar><div class="body"><div class="page"><console-masthead></console-masthead><div class="cols"><console-nav></console-nav><scroll-track></scroll-track><main><page-tabs></page-tabs><project-dashboard></project-dashboard></main><scroll-track class="short"></scroll-track></div></div><browser-rail></browser-rail></div><task-bar></task-bar><call-window></call-window>`);
</script>
</body>
</html>
